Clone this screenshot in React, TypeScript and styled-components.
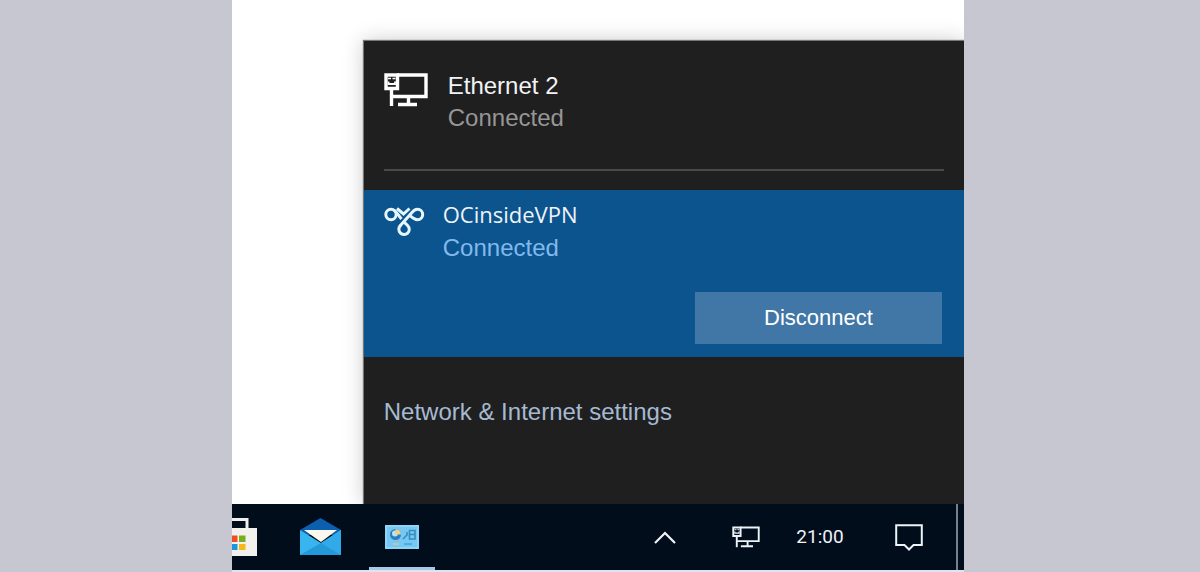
import React from "react";
import styled, { createGlobalStyle } from "styled-components";

const GlobalStyle = createGlobalStyle`
  *, *::before, *::after { box-sizing: border-box; }
  body {
    margin: 0;
    background: #c7c7d1;
    font-family: "Liberation Sans", Arial, sans-serif;
  }
  button { font: inherit; color: inherit; border: 0; padding: 0; background: none; cursor: pointer; }
  svg { display: block; flex: none; }
`;

const Page = styled.main`
  display: grid;
  grid-template-columns: 232fr 732fr 236fr;
`;

const Screen = styled.section`
  grid-column: 2;
  min-width: 0;
  overflow: hidden;
  background: #fff;
`;

const Desktop = styled.div`
  padding: 41px 0 0 18%;
  overflow: hidden;
`;

const Flyout = styled.div`
  background: #1f1f1f;
  color: #fff;
  box-shadow: 0 0 1px 1px #777, 0 0 20px rgba(0, 0, 0, 0.22);
`;

const Connection = styled.section<{ $active?: boolean }>`
  display: flex;
  flex-direction: column;
  padding: ${(p) => (p.$active ? "8px 22px 13px 20px" : "29px 20px 19px")};
  min-height: ${(p) => (p.$active ? 167 : 149)}px;
  background: ${(p) => (p.$active ? "#0c548e" : "transparent")};
`;

const ConnectionHead = styled.div<{ $gap: number }>`
  display: flex;
  align-items: flex-start;
  gap: ${(p) => p.$gap}px;
`;

const Glyph = styled.span<{ $top: number }>`
  padding-top: ${(p) => p.$top}px;
`;

const Labels = styled.div<{ $gap?: number }>`
  display: flex;
  flex-direction: column;
  gap: ${(p) => p.$gap ?? 0}px;
`;

const Name = styled.h2<{ $humanist?: boolean }>`
  margin: 0;
  font-family: ${(p) => (p.$humanist ? '"Open Sans", sans-serif' : "inherit")};
  font-size: ${(p) => (p.$humanist ? 22 : 24)}px;
  line-height: 32px;
  font-weight: 400;
  color: #f0f3f5;
`;

const Status = styled.p<{ $active?: boolean }>`
  margin: 0;
  font-size: 24px;
  line-height: 32px;
  color: ${(p) => (p.$active ? "#82b9ed" : "#969696")};
`;

const Divider = styled.hr`
  width: 100%;
  margin: auto 0 0;
  border: 0;
  border-top: 2px solid #4a4a4a;
`;

const DisconnectButton = styled.button`
  align-self: flex-end;
  width: 247px;
  height: 52px;
  margin-top: auto;
  background: #4177a7;
  color: #fff;
  font-size: 22px;
`;

const FlyoutFooter = styled.div`
  min-height: 147px;
  padding: 39px 20px;
`;

const SettingsLink = styled.a`
  color: #a5bad2;
  font-size: 24px;
  line-height: 32px;
  text-decoration: none;
`;

const Taskbar = styled.footer`
  display: flex;
  height: 68px;
  background: #020d1b;
  color: #eef3f8;
  border-bottom: 2px solid #dfe4ee;
`;

const Apps = styled.nav`
  display: flex;
  gap: 16px;
`;

const AppButton = styled.button<{ $cut?: boolean; $open?: boolean }>`
  display: flex;
  align-items: center;
  justify-content: ${(p) => (p.$cut ? "flex-start" : "center")};
  width: ${(p) => (p.$cut ? 39 : 66)}px;
  border-top: 3px solid transparent;
  border-bottom: 3px solid ${(p) => (p.$open ? "#a9c8e6" : "transparent")};
`;

const Tray = styled.div`
  display: flex;
  margin-left: auto;
`;

const TrayButton = styled.button<{ $width: number }>`
  display: flex;
  align-items: center;
  justify-content: center;
  width: ${(p) => p.$width}px;
`;

const Clock = styled.time`
  width: 84px;
  text-align: center;
  font-family: Roboto, sans-serif;
  font-size: 19px;
  font-weight: 400;
  line-height: 65px;
`;

const ShowDesktop = styled.button`
  width: 8px;
  border-left: 2px solid #75808c;
`;

const EthernetIcon = ({ small }: { small?: boolean }) => (
  <svg width={small ? 28 : 44} height={small ? 22 : 34} viewBox="0 0 44 34" fill="none" stroke="currentColor" strokeWidth={small ? 3 : 3.4} aria-hidden="true">
    <path d="M13 2H42V23.500H8" />
    <path d="M2 2H13.500V15.500H2Z" />
    <path d="M7.500 16V33" />
    <path d="M24.500 24V31M14 31.500H33" />
    <path d="M4 5.500H11.500" strokeWidth="1.500" strokeDasharray="3 1.500" />
    <path d="M4.500 8.500V11H11V8.500" strokeWidth="1.800" />
  </svg>
);

const VpnIcon = () => (
  <svg width="41" height="30" viewBox="0 0 41 30" fill="none" stroke="#e6f6ff" strokeWidth="3" aria-hidden="true">
    <circle cx="7" cy="8.500" r="5.200" />
    <path d="M10 4.200C13 6 14.500 9.500 17.500 13" />
    <path d="M13 2.500L19.500 8L25.500 2.500" />
    <path d="M15.500 20.500L27.500 7C29.500 4.500 31.500 3.300 33.500 3.300A5.200 5.200 0 1 1 33.500 13.700C30.500 13.700 28.500 12 26.500 10" />
    <path d="M16.500 19.500A5.200 5.200 0 1 0 23.800 19.700C22.500 18.300 21.500 17.500 20.500 16.500" />
  </svg>
);

const StoreIcon = () => (
  <svg width="25" height="40" viewBox="0 0 25 40" aria-hidden="true">
    <path d="M0 2.500H15V12" fill="none" stroke="#eef0ef" strokeWidth="3" />
    <path d="M0 11H25V39H0Z" fill="#f2f1ed" />
    <path d="M0 18.500H5.500V25H0Z" fill="#ee4e25" />
    <path d="M7 18.500H13.500V25H7Z" fill="#78ad1f" />
    <path d="M0 27H5.500V33H0Z" fill="#1797de" />
    <path d="M7 27H13.500V33H7Z" fill="#f8b81a" />
  </svg>
);

const MailIcon = () => (
  <svg width="41" height="38" viewBox="0 0 41 38" aria-hidden="true">
    <path d="M0 12L20.500 0L41 12V17H0Z" fill="#0c5fae" />
    <path d="M0 12L21 25L41 12V37H0Z" fill="#38b4ef" />
    <path d="M21 25L41 12V37Z" fill="#30aae8" />
    <path d="M0 37L21 25L41 37Z" fill="#2499da" />
    <path d="M4 12H37L21 24Z" fill="#fbf8f0" />
  </svg>
);

const ControlPanelIcon = () => (
  <svg width="34" height="24" viewBox="0 0 34 24" aria-hidden="true">
    <path d="M0 0H34V24H0Z" fill="#74c8f3" />
    <path d="M1 1H33V23H1Z" fill="none" stroke="#8dd5f8" strokeWidth="2" />
    <circle cx="10.500" cy="9.500" r="5.500" fill="#2c7fba" />
    <circle cx="10" cy="8.500" r="3" fill="#b9e2f6" />
    <path d="M10.500 9.500V4A5.500 5.500 0 0 1 16 9.500Z" fill="#f0cf8e" />
    <path d="M18 14L22 10V7M24.500 5.500H30V14H24.500ZM24.500 9.500H30" fill="none" stroke="#3a8cbc" strokeWidth="1.600" />
    <path d="M8 19H14" stroke="#d9c48c" strokeWidth="1.600" />
    <path d="M19 19H27" stroke="#4ca3d2" strokeWidth="1.600" />
  </svg>
);

export default function App() {
  return (
    <>
      <GlobalStyle />
      <Page>
        <Screen>
          <Desktop>
            <Flyout>
              <Connection>
                <ConnectionHead $gap={20}>
                  <Glyph $top={3}>
                    <EthernetIcon />
                  </Glyph>
                  <Labels>
                    <Name>Ethernet 2</Name>
                    <Status>Connected</Status>
                  </Labels>
                </ConnectionHead>
                <Divider />
              </Connection>
              <Connection $active>
                <ConnectionHead $gap={18}>
                  <Glyph $top={8}>
                    <VpnIcon />
                  </Glyph>
                  <Labels $gap={2}>
                    <Name $humanist>OCinsideVPN</Name>
                    <Status $active>Connected</Status>
                  </Labels>
                </ConnectionHead>
                <DisconnectButton type="button">Disconnect</DisconnectButton>
              </Connection>
              <FlyoutFooter>
                <SettingsLink href="#settings">Network &amp; Internet settings</SettingsLink>
              </FlyoutFooter>
            </Flyout>
          </Desktop>
          <Taskbar>
            <Apps>
              <AppButton type="button" $cut aria-label="Store">
                <StoreIcon />
              </AppButton>
              <AppButton type="button" aria-label="Mail">
                <MailIcon />
              </AppButton>
              <AppButton type="button" $open aria-label="Control Panel">
                <ControlPanelIcon />
              </AppButton>
            </Apps>
            <Tray>
              <TrayButton type="button" $width={98} aria-label="Show hidden icons">
                <svg width="22" height="13" viewBox="0 0 22 13" fill="none" stroke="currentColor" strokeWidth="2.200">
                  <path d="M1 12L11 2L21 12" />
                </svg>
              </TrayButton>
              <TrayButton type="button" $width={64} aria-label="Network">
                <EthernetIcon small />
              </TrayButton>
              <Clock>21:00</Clock>
              <TrayButton type="button" $width={94} aria-label="Notifications">
                <svg width="28" height="27" viewBox="0 0 28 27" fill="none" stroke="currentColor" strokeWidth="2">
                  <path d="M1.200 1.200H26.800V21H18.500L14 25.500L9.500 21H1.200Z" />
                </svg>
              </TrayButton>
              <ShowDesktop type="button" aria-label="Show desktop" />
            </Tray>
          </Taskbar>
        </Screen>
      </Page>
    </>
  );
}
